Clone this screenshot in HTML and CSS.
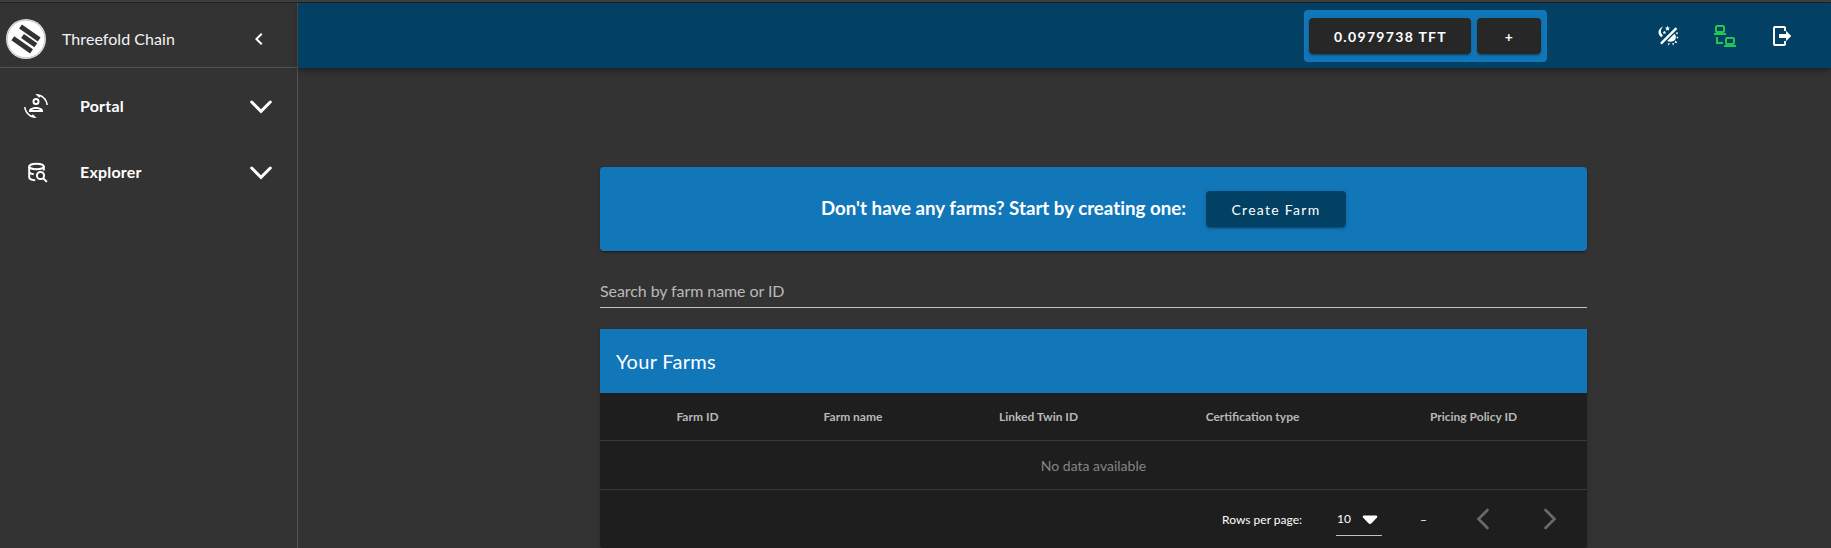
FILE: index.html
```
<!DOCTYPE html>
<html lang="en">
<head>
<meta charset="utf-8">
<title>Threefold Chain</title>
<link rel="stylesheet" href="styles.css">
</head>
<body>
<div class="app">
  <aside class="sidebar">
    <div class="brand">
      <svg class="logo" viewBox="0 0 40 40"><circle cx="20" cy="20" r="20" fill="#e4e4e4"/><circle cx="20" cy="20" r="18.8" fill="#fff" stroke="#aaa" stroke-width=".6"/><g fill="none" stroke="#333" stroke-width="5"><path d="M14.500 7.500 33.200 20.500M16.500 17 29.800 26.300M6.800 19.200 25.500 32.400"/></g></svg>
      <span class="brand-name">Threefold Chain</span>
      <svg class="collapse" viewBox="0 0 24 24"><path d="M15.41 16.58 10.83 12l4.58-4.59L14 6l-6 6 6 6z"/></svg>
    </div>
    <nav class="nav">
      <a class="nav-item">
        <svg class="nav-icon" viewBox="0 0 24 24"><path fill-rule="evenodd" d="M7.5 21.5C4.25 19.94 1.91 16.76 1.55 13H.05C.56 19.16 5.71 24 12 24l.66-.03-3.81-3.81zM16.5 2.5c3.25 1.57 5.59 4.74 5.95 8.5h1.5C23.44 4.84 18.29 0 12 0l-.66.03 3.81 3.81zM12 4a3.5 3.5 0 1 0 0 7 3.5 3.5 0 0 0 0-7m0 1.9a1.6 1.6 0 1 1 0 3.2 1.6 1.6 0 0 1 0-3.2M12 13c-2.33 0-7 1.17-7 3.500V18h14v-1.500C19 14.170 14.330 13 12 13m-4.500 3.100c1-.7 2.800-1.200 4.500-1.200s3.500.5 4.500 1.200z"/></svg>
        <span class="nav-label">Portal</span>
        <svg class="chevron" viewBox="0 0 22 14"><path d="m1.700 2 9.300 9.300L20.300 2"/></svg>
      </a>
      <a class="nav-item">
        <svg class="nav-icon line" viewBox="0 0 24 24"><ellipse cx="12.500" cy="6.500" rx="7.300" ry="2.800"/><path d="M5.200 6.500v10.800c0 1.600 2.400 2.700 6 2.900M5.200 11.800c.2 1.200 2 2.100 4.600 2.500M19.800 6.500v4"/><circle cx="16.500" cy="15.500" r="3.600"/><path d="m19.200 18.200 3.700 3.700"/></svg>
        <span class="nav-label">Explorer</span>
        <svg class="chevron" viewBox="0 0 22 14"><path d="m1.700 2 9.300 9.300L20.300 2"/></svg>
      </a>
    </nav>
  </aside>
  <div class="page">
    <header class="topbar">
      <div class="wallet">
        <button class="btn balance">0.0979738 TFT</button>
        <button class="btn deposit">+</button>
      </div>
      <div class="actions">
        <svg class="action" viewBox="0 0 24 24"><path d="M7.300 2.300C2 4.500.700 9.800 5.200 13.200L7 11.500C4.200 9.300 4.200 5.500 7.300 2.300M11.500 1.800l.75 1.650 1.800.2-1.350 1.200.4 1.800-1.600-.9-1.600.9.4-1.800-1.350-1.200 1.800-.2zM8.400 6.700l.6 1.100 1.200.2-.9.850.2 1.250-1.100-.6-1.100.6.200-1.250-.9-.850 1.200-.2zM19.600 3.200l1.700 1.700L5.800 20.400l-1.700-1.700zM18.500 9.800c2.300 2.300 1.600 6-1 7.300-2.200 1.100-4.500.8-6.300-.1zM19.500 8.700l2.500-.5-.8 2.500zM20.800 12.300l1.900 1.200-1.900 1.200zM19.700 16.500l1.700 2.700-3-.8zM16 19.200h2.300L17.200 21.500zM11.800 19.200l2.300.3-1.700 2z"/></svg>
        <svg class="action online" viewBox="0 0 24 24"><path d="M4 1a2 2 0 0 0-2 2v4a2 2 0 0 0 2 2H1v2h12V9h-3a2 2 0 0 0 2-2V3a2 2 0 0 0-2-2zm0 2h6v4H4zM3 13v7h7v-2H5v-5zM14 13a2 2 0 0 0-2 2v4a2 2 0 0 0 2 2h-3v2h12v-2h-3a2 2 0 0 0 2-2v-4a2 2 0 0 0-2-2zm0 2h6v4h-6z"/></svg>
        <svg class="action" viewBox="0 0 24 24"><path d="M16 17.250V14H9v-4h7V6.750L21.250 12zM14 2a2 2 0 0 1 2 2v3h-2V4H5v16h9v-3h2v3a2 2 0 0 1-2 2H5a2 2 0 0 1-2-2V4a2 2 0 0 1 2-2z"/></svg>
      </div>
    </header>
    <main class="content">
      <section class="banner">
        <h1 class="banner-text">Don't have any farms? Start by creating one:</h1>
        <button class="btn create">Create Farm</button>
      </section>
      <div class="search">Search by farm name or ID</div>
      <section class="card">
        <h2 class="card-title">Your Farms</h2>
        <table class="farms">
          <colgroup><col class="c1"><col class="c2"><col class="c3"><col class="c4"><col class="c5"></colgroup>
          <thead><tr><th>Farm ID</th><th>Farm name</th><th>Linked Twin ID</th><th>Certification type</th><th class="last">Pricing Policy ID</th></tr></thead>
          <tbody><tr><td colspan="5">No data available</td></tr></tbody>
        </table>
        <footer class="pager">
          <span>Rows per page:</span>
          <span class="size">10<svg class="caret" viewBox="0 0 16 10"><path d="M1.500.5h13q1.400.5.5 1.900L9.800 8.100Q8 9.900 6.200 8.100L1 2.400Q.1 1 1.500.5"/></svg></span>
          <span class="range">–</span>
          <svg class="arrow" viewBox="0 0 14 22"><path d="M11.500 2 2.500 11l9 9"/></svg>
          <svg class="arrow next" viewBox="0 0 14 22"><path d="m2.500 2 9 9-9 9"/></svg>
        </footer>
      </section>
    </main>
  </div>
</div>
</body>
</html>
```
FILE: styles.css
```
* { box-sizing: border-box; }
body {
  margin: 0;
  height: 548px;
  overflow: hidden;
  background: #333;
  color: #fff;
  font-family: Lato, sans-serif;
  font-size: 16px;
  border-top: 2px solid #3d3d3d;
}
.app { display: flex; height: 546px; border-top: 1px solid #222; }
.sidebar { width: 298px; border-right: 1px solid #535353; flex: none; }
.brand {
  display: flex;
  align-items: center;
  height: 65px;
  padding: 7px 0 0 6px;
  border-bottom: 1px solid #535353;
}
.logo { width: 40px; height: 40px; }
.brand-name { width: 185px; margin-left: 16px; line-height: 24px; color: #f4f4f4; letter-spacing: .05px; }
.collapse { width: 24px; height: 24px; fill: #fff; }
.nav { padding-top: 10px; }
.nav-item { display: flex; align-items: center; height: 56px; margin-bottom: 10px; padding: 0 25px 0 24px; }
.nav-icon { width: 24px; height: 24px; fill: #fff; }
.line { fill: none; stroke: #fff; stroke-width: 2; }
.nav-label { flex: 1; margin: -2px 0 0 32px; font-weight: 700; letter-spacing: .2px; }
.chevron { width: 22px; height: 14px; margin: 2px 0 0; fill: none; stroke: #fff; stroke-width: 3; stroke-linecap: round; }
.page { flex: 1; }
.topbar {
  display: flex;
  justify-content: flex-end;
  height: 65px;
  padding-right: 37px;
  background: #024064;
  box-shadow: 0 2px 4px -1px rgba(0,0,0,.2), 0 4px 5px rgba(0,0,0,.14), 0 1px 10px rgba(0,0,0,.12);
}
.wallet {
  display: flex;
  gap: 6px;
  width: 243px;
  height: 52px;
  margin-top: 7px;
  padding: 8px 5px;
  background: #1177b9;
  border-radius: 4px;
}
.btn {
  height: 36px;
  padding: 0;
  border: 0;
  border-radius: 4px;
  color: #fff;
  font: 700 14px/36px Lato, sans-serif;
  letter-spacing: 1.25px;
  box-shadow: 0 3px 1px -2px rgba(0,0,0,.2), 0 2px 2px rgba(0,0,0,.14), 0 1px 5px rgba(0,0,0,.12);
}
.balance { width: 162px; padding: 1px 0 0 1px; background: #272727; letter-spacing: 1.32px; }
.deposit { width: 64px; padding: 1px 0 0 1px; background: #272727; }
.actions { display: flex; gap: 33px; padding-top: 21px; margin-left: 109px; }
.action { width: 24px; height: 24px; fill: #fff; }
.online { fill: #21c653; }
.content { width: 987px; margin: 99px 0 0 302px; }
.banner {
  display: flex;
  align-items: center;
  justify-content: center;
  height: 84px;
  padding-right: 20px;
  background: #1177b9;
  border-radius: 4px;
  box-shadow: 0 3px 1px -2px rgba(0,0,0,.2), 0 2px 2px rgba(0,0,0,.14), 0 1px 5px rgba(0,0,0,.12);
}
.banner-text { margin: 0 20px 2px 0; font-size: 18.72px; line-height: 32px; white-space: nowrap; font-variant-ligatures: none; }
.create { width: 140px; padding-top: 1px; background: #024064; font-weight: 400; letter-spacing: 1.3px; }
.search { height: 57px; padding-top: 30px; line-height: 20px; letter-spacing: -.08px; color: #b9b9b9; border-bottom: 1px solid #c2c2c2; }
.card {
  height: 219px;
  margin-top: 21px;
  background: #1e1e1e;
  border-radius: 0 0 4px 4px;
  box-shadow: 0 3px 1px -2px rgba(0,0,0,.2), 0 2px 2px rgba(0,0,0,.14), 0 1px 5px rgba(0,0,0,.12);
}
.card-title { height: 64px; margin: 0; padding-left: 16px; background: #1177b9; font-size: 20px; font-weight: 400; line-height: 64px; letter-spacing: .3px; }
.farms { width: 100%; table-layout: fixed; border-collapse: separate; border-spacing: 0; text-align: center; }
.c1 { width: 195px; }
.c2 { width: 116px; }
.c3 { width: 255px; }
.c4 { width: 173px; }
.c5 { width: 248px; }
.farms th { height: 48px; padding: 0; font-size: 12px; color: #b8b8b8; border-bottom: 1px solid #393939; }
.farms .last { padding-left: 21px; }
.farms td { height: 49px; padding: 0; font-size: 14px; color: #858585; border-bottom: 1px solid #393939; }
.pager { display: flex; align-items: center; height: 58px; font-size: 12px; padding-right: 30px; justify-content: flex-end; }
.size { display: flex; align-items: center; gap: 11px; width: 46px; height: 33px; margin-left: 34px; padding-left: 1px; border-bottom: 1px solid #c2c2c2; }
.caret { width: 16px; height: 10px; margin-top: 2px; fill: #fff; }
.range { width: 8px; margin-left: 38px; }
.arrow { width: 14px; height: 22px; margin-left: 48px; fill: none; stroke: #696969; stroke-width: 2.7; stroke-linecap: round; }
.next { margin-left: 53px; }
```
